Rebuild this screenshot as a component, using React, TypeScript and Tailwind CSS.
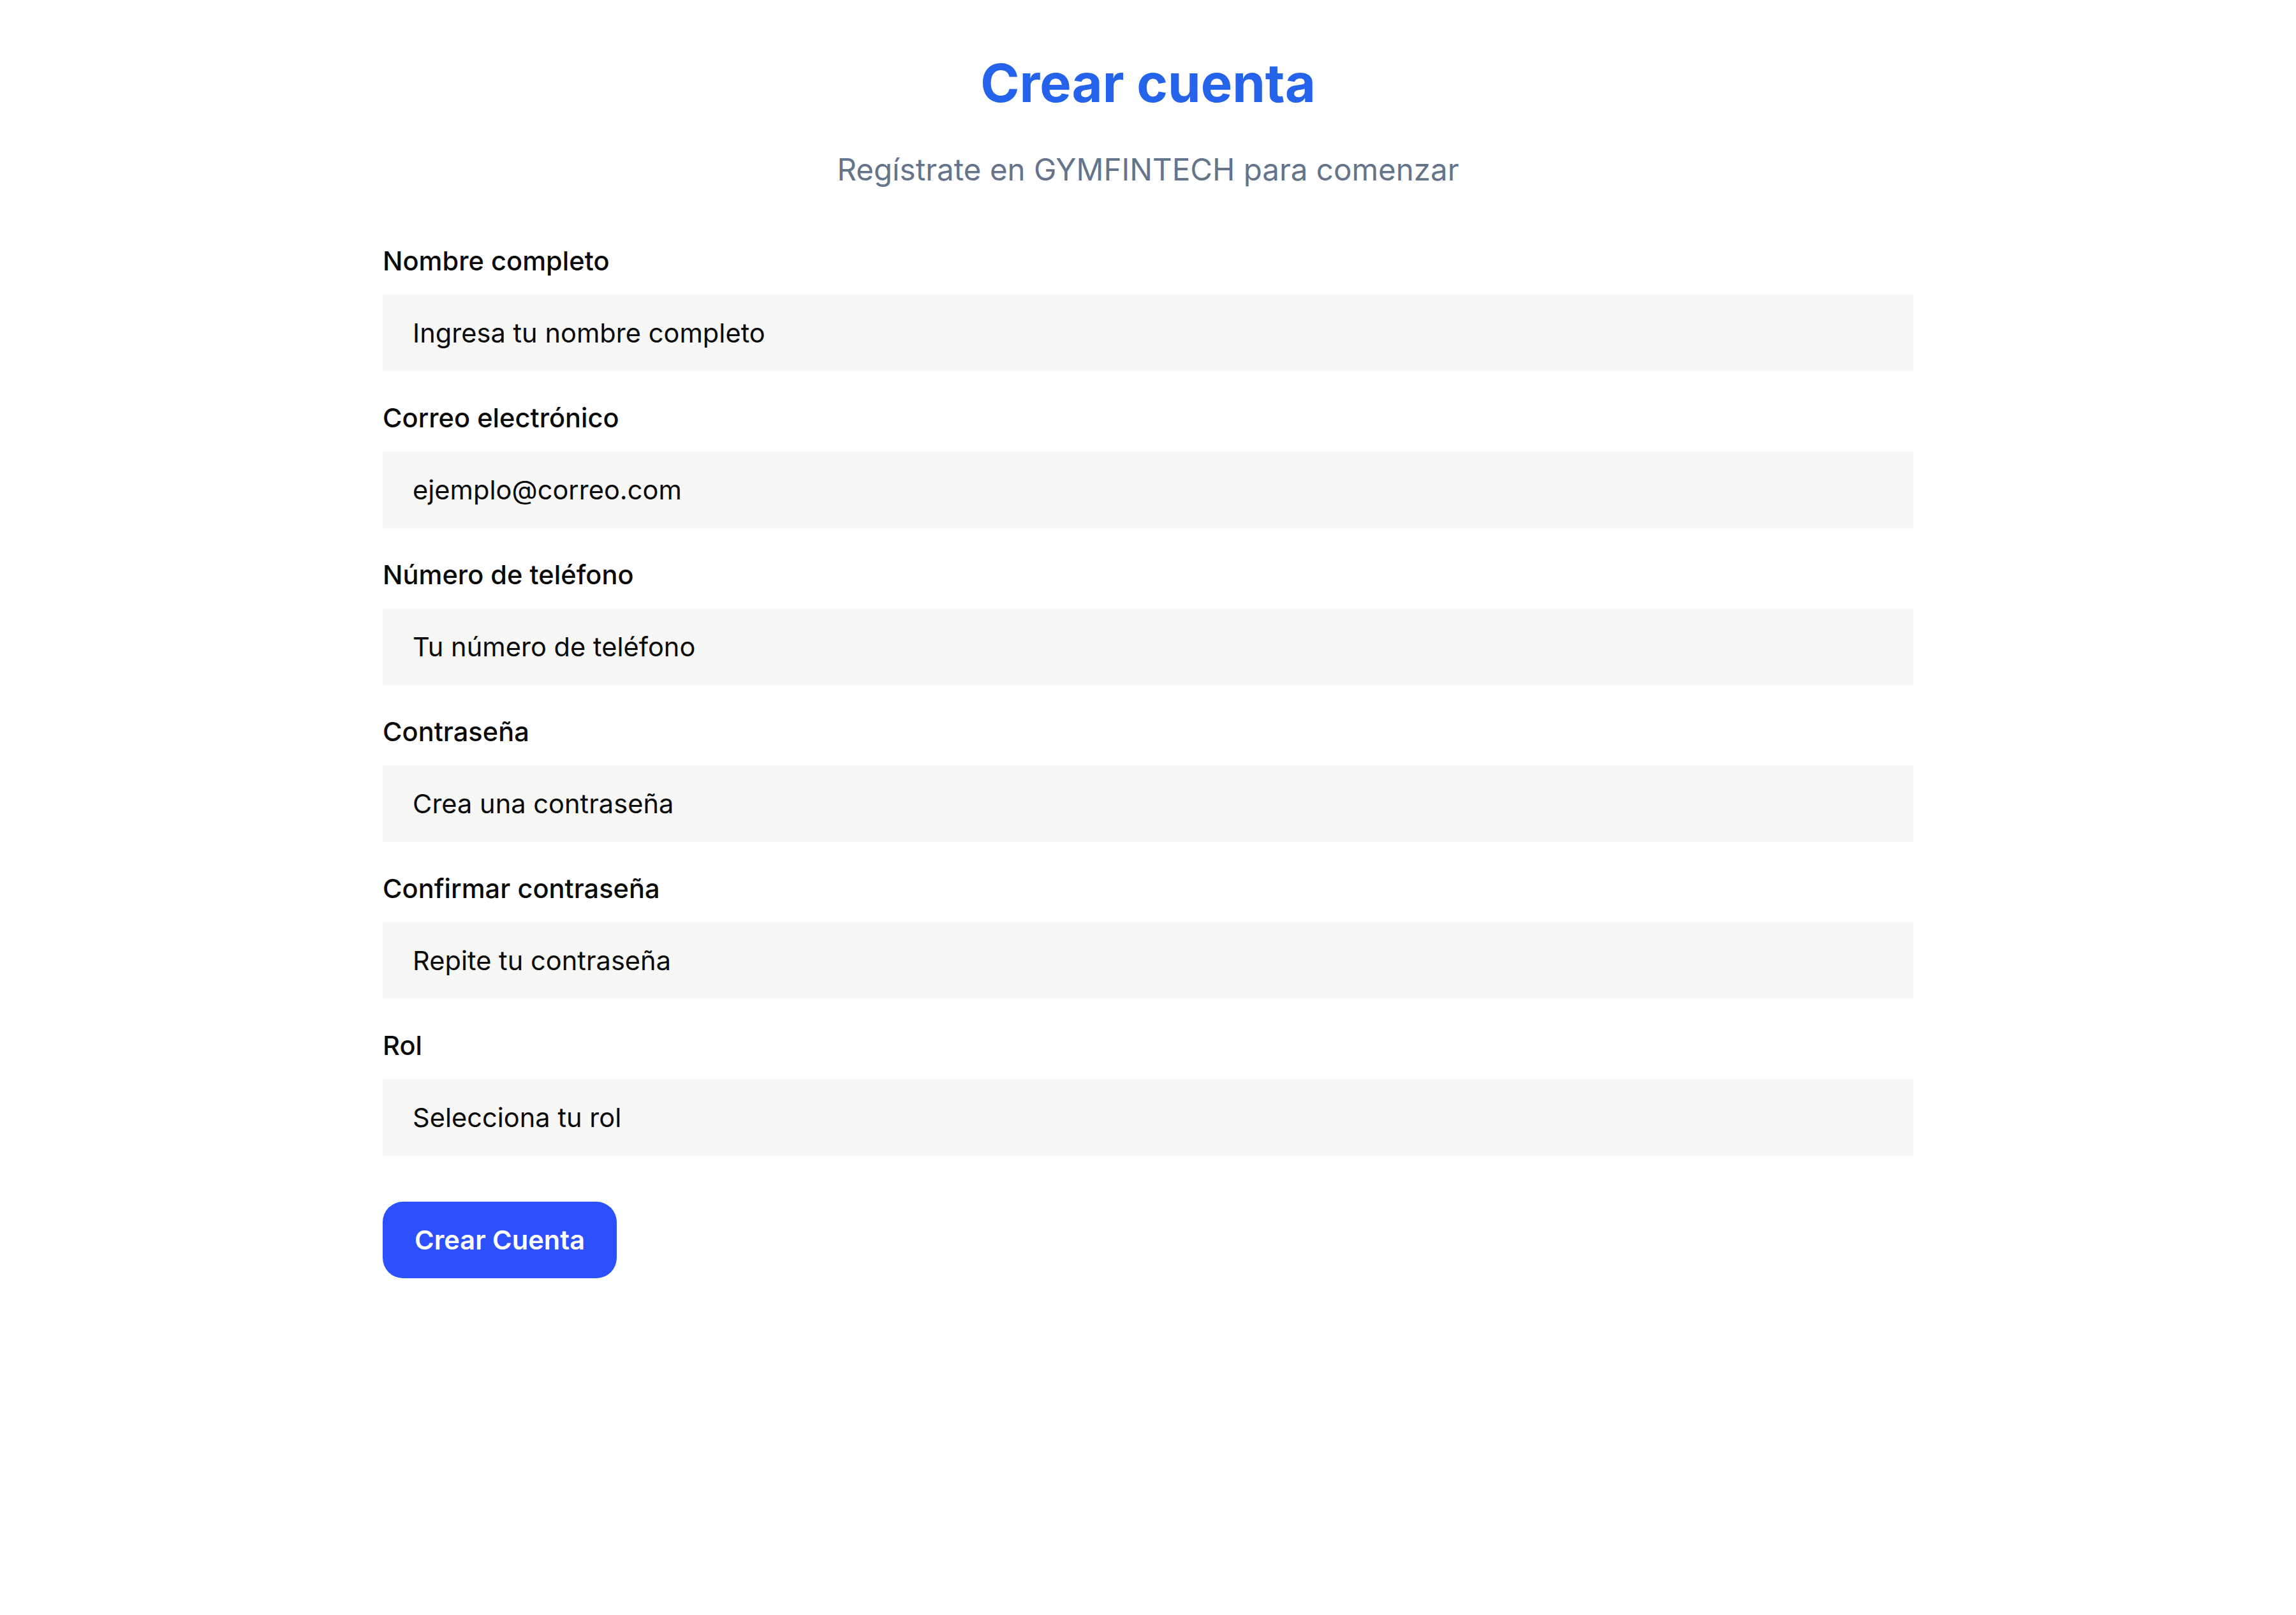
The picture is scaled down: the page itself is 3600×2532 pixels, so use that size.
const fields = [
  { label: 'Nombre completo', placeholder: 'Ingresa tu nombre completo', type: 'text' },
  { label: 'Correo electrónico', placeholder: 'ejemplo@correo.com', type: 'email' },
  { label: 'Número de teléfono', placeholder: 'Tu número de teléfono', type: 'tel' },
  { label: 'Contraseña', placeholder: 'Crea una contraseña', type: 'password' },
  { label: 'Confirmar contraseña', placeholder: 'Repite tu contraseña', type: 'password' },
]

function Field({ label, children }: { label: string; children: React.ReactNode }) {
  return (
    <div className="flex flex-col">
      <label className="mb-[23px] text-[41.6px] leading-[60px] font-medium text-[#0a0a0a]">
        {label}
      </label>
      {children}
    </div>
  )
}

export default function App() {
  const inputClass =
    'h-[120px] w-full bg-[#f7f7f5] px-[47px] text-[41.6px] text-[#0a0a0a] outline-none placeholder:text-[#0a0a0a]'

  return (
    <div className="min-h-screen bg-white font-['Inter',sans-serif]">
      <div className="mx-auto flex w-[2400px] flex-col pt-[82px]">
        <h1 className="text-center text-[83px] leading-[96px] font-bold text-[#2563eb]">
          Crear cuenta
        </h1>
        <p className="mt-[53px] text-center text-[47.5px] leading-[69px] text-[#64748b]">
          Regístrate en GYMFINTECH para comenzar
        </p>

        <form className="mt-[79px] flex flex-col gap-[43px]">
          {fields.map((f) => (
            <Field key={f.label} label={f.label}>
              <input type="text" placeholder={f.placeholder} className={inputClass} />
            </Field>
          ))}
          <Field label="Rol">
            <select defaultValue="" className={inputClass + ' appearance-none rounded-none'}>
              <option value="" disabled>
                Selecciona tu rol
              </option>
              <option value="cliente">Cliente</option>
              <option value="entrenador">Entrenador</option>
              <option value="admin">Administrador</option>
            </select>
          </Field>
        </form>

        <div className="mt-[72px]">
          <button
            type="button"
            className="h-[120px] rounded-[32px] bg-[#2d50ff] px-[50px] text-[41.6px] font-semibold text-white"
          >
            Crear Cuenta
          </button>
        </div>
      </div>
    </div>
  )
}
